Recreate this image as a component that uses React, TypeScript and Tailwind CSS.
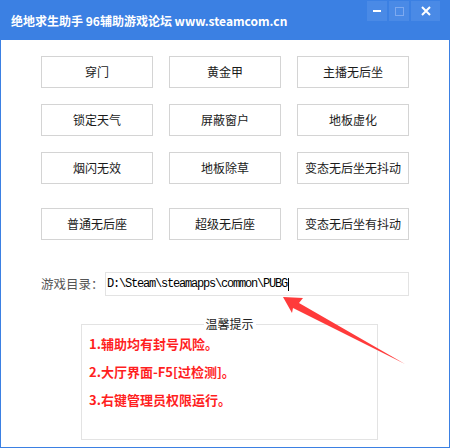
import React from "react";

const rows = [
  ["穿门", "黄金甲", "主播无后坐"],
  ["锁定天气", "屏蔽窗户", "地板虚化"],
  ["烟闪无效", "地板除草", "变态无后坐无抖动"],
];
const lastRow = ["普通无后座", "超级无后座", "变态无后坐有抖动"];

const font = { fontFamily: '"Microsoft YaHei", "Noto Sans CJK SC", "Noto Sans", sans-serif' };

function Btn({ label }: { label: string }) {
  return (
    <div className="flex h-[32px] w-[112px] items-center justify-center border border-[#d4d4d4] bg-white text-[12px] text-[#1a1a1a]">
      {label}
    </div>
  );
}

export default function App() {
  return (
    <div
      className="relative flex h-[448px] w-[450px] flex-col overflow-hidden border border-t-0 border-[#3b80e3] bg-white"
      style={font}
    >
      <div className="flex h-[40px] shrink-0 items-start justify-between bg-[#3b80e3]">
        <div className="ml-[10px] mt-[12px] text-[12px] font-bold leading-[18px] text-white">
          绝地求生助手 96辅助游戏论坛 www.steamcom.cn
        </div>
        <div className="mr-[9px] mt-[1px] flex gap-[2px]">
          <div className="flex h-[20px] w-[20px] items-center justify-center bg-[#4a8ae6]">
            <div className="h-[2px] w-[8px] bg-white" />
          </div>
          <div className="flex h-[20px] w-[20px] items-center justify-center bg-[#4a8ae6]">
            <div className="h-[9px] w-[9px] border border-[#7eaaf0]" />
          </div>
          <div className="flex h-[20px] w-[29px] items-center justify-center bg-[#4a8ae6]">
            <svg width="10" height="10" viewBox="0 0 10 10">
              <path d="M1 1 L9 9 M9 1 L1 9" stroke="white" strokeWidth="2" />
            </svg>
          </div>
        </div>
      </div>

      <div className="flex flex-col pl-[40px] pt-[16px]">
        <div className="flex flex-col gap-[16px]">
          {rows.map((r, i) => (
            <div key={i} className="flex gap-[16px]">
              {r.map((l) => (
                <Btn key={l} label={l} />
              ))}
            </div>
          ))}
        </div>
        <div className="mt-[24px] flex gap-[16px]">
          {lastRow.map((l) => (
            <Btn key={l} label={l} />
          ))}
        </div>

        <div className="mt-[32px] flex items-center">
          <div className="w-[64px] text-[12.5px] text-[#555]">游戏目录：</div>
          <div
            className="flex h-[24px] w-[304px] items-center border border-[#e3e3e3] pl-[1px] text-[12px] text-black"
            style={{ fontFamily: '"Liberation Mono", "DejaVu Sans Mono", monospace', letterSpacing: "-1.2px" }}
          >
            <span>D:\Steam\steamapps\common\PUBG</span>
            <span className="ml-[1px] inline-block h-[13px] w-[1px] bg-black" />
          </div>
        </div>

        <div className="relative ml-[40px] mt-[28px] h-[116px] w-[297px] border border-[#e3e3e3] pl-[7px] pt-[5px]">
          <div className="absolute left-1/2 top-[-9px] -translate-x-1/2 bg-white px-[2px] text-[12px] leading-[16px] text-[#222]">
            温馨提示
          </div>
          <div className="flex flex-col text-[13px] font-bold leading-[28px] text-[#ff1f1f]">
            <div>1.辅助均有封号风险。</div>
            <div>2.大厅界面-F5[过检测]。</div>
            <div>3.右键管理员权限运行。</div>
          </div>
        </div>
      </div>

      <svg className="pointer-events-none absolute left-0 top-0" width="450" height="448" viewBox="0 0 450 448">
        <polygon
          points="282,297 302,298 298,303 404,364 292,308 291,313"
          fill="#ff3b3b"
        />
      </svg>
    </div>
  );
}
